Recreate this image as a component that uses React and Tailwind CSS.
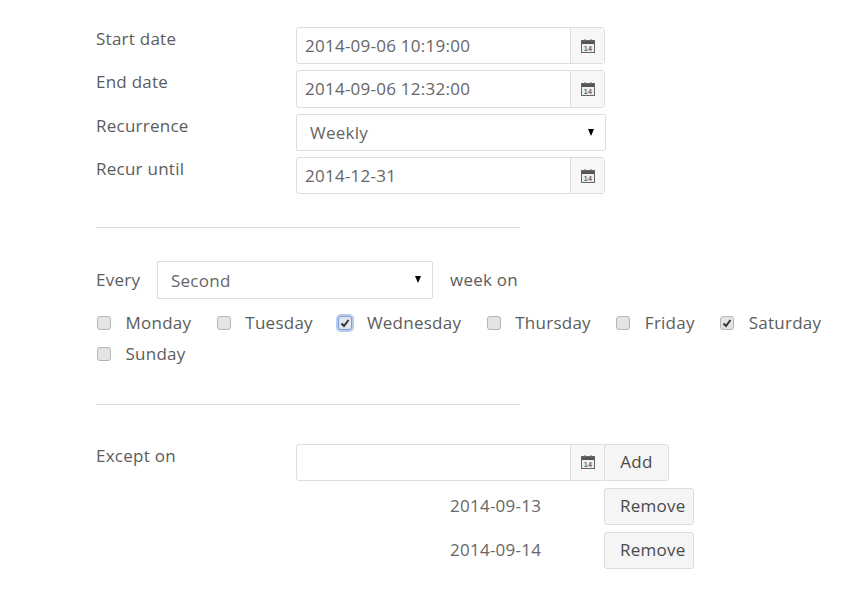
import React from "react";

const CalendarIcon = () => (
  <svg width="14" height="14" viewBox="0 0 14 14" className="block">
    <rect x="0.5" y="1.5" width="13" height="12" fill="#eef0f0" stroke="#666" />
    <rect x="1" y="2" width="12" height="3" fill="#555" />
    <rect x="3" y="0.5" width="2" height="2" fill="#666" />
    <rect x="9" y="0.5" width="2" height="2" fill="#666" />
    <text x="7" y="12" textAnchor="middle" fontSize="7" fontWeight="700" fontFamily="Liberation Sans, sans-serif" fill="#666">14</text>
  </svg>
);

const DateInput = ({ value }) => (
  <div className="flex h-[37.33px] w-[309px] rounded-[3px] border border-[#ddd] bg-white">
    <div className="flex flex-1 items-center px-2 text-[#666]">{value}</div>
    <div className="flex w-[34px] items-center justify-center border-l border-[#ddd] bg-[#f7f7f7]">
      <CalendarIcon />
    </div>
  </div>
);

const SelectBox = ({ value, width }) => (
  <div className={`flex h-[37.33px] ${width} items-center justify-between rounded-[2px] border border-[#ddd] bg-white pl-[13px] pr-[11px] text-[#666]`}>
    <span className="pt-0.5">{value}</span>
    <span className="h-0 w-0 border-x-[3.5px] border-t-[7px] border-x-transparent border-t-black" />
  </div>
);

const Day = ({ label, checked, focus }) => (
  <label className="flex items-center text-[#5c5c5c]">
    <span
      className={`flex h-[14px] w-[14px] items-center justify-center rounded-[3px] border ${
        focus ? "border-[#7f9fd6] bg-[#dfe6f2] ring-2 ring-[#b9cbea]" : "border-[#b5b5b5] bg-[#e4e4e4]"
      }`}
    >
      {checked && (
        <svg width="10" height="10" viewBox="0 0 10 10">
          <path d="M1.5 5.5 L4 8 L8.5 2" fill="none" stroke="#333" strokeWidth="2" />
        </svg>
      )}
    </span>
    <span className="ml-[14.5px]">{label}</span>
  </label>
);

const Row = ({ label, children }) => (
  <div className="flex">
    <div className="w-[200px] text-[#5c5c5c]">{label}</div>
    {children}
  </div>
);

const RemoveRow = ({ date }) => (
  <div className="flex items-center pl-[354px]">
    <div className="w-[154px] text-[#666]">{date}</div>
    <button className="h-[37.33px] w-[90px] rounded-[3px] border border-[#ddd] bg-[#f5f5f5] pl-[15px] text-left text-[#4a4a4a]">Remove</button>
  </div>
);

export default function App() {
  return (
    <div className="min-h-[592px] bg-white pl-[96px] pt-[27px] text-[17px] leading-6 tracking-[0.25px] font-['Open_Sans',sans-serif]">
      <div className="flex flex-col gap-[6px]">
        <Row label="Start date"><DateInput value="2014-09-06 10:19:00" /></Row>
        <Row label="End date"><DateInput value="2014-09-06 12:32:00" /></Row>
        <Row label="Recurrence"><SelectBox value="Weekly" width="w-[310px]" /></Row>
        <Row label="Recur until"><DateInput value="2014-12-31" /></Row>
      </div>

      <hr className="mt-[33px] w-[424px] border-[#ddd]" />

      <div className="mt-[33px] flex items-center text-[#5c5c5c]">
        <span className="w-[61px]">Every</span>
        <SelectBox value="Second" width="w-[276px]" />
        <span className="ml-[17px]">week on</span>
      </div>

      <div className="mt-[12px] flex w-[740px] flex-wrap gap-x-[25.5px] gap-y-[7px] pl-[1px]">
        <Day label="Monday" />
        <Day label="Tuesday" />
        <Day label="Wednesday" checked focus />
        <Day label="Thursday" />
        <Day label="Friday" />
        <Day label="Saturday" checked />
        <Day label="Sunday" />
      </div>

      <hr className="mt-[38px] w-[424px] border-[#ddd]" />

      <div className="mt-[39px] flex flex-col gap-[6.67px]">
        <div className="flex">
          <div className="w-[200px] text-[#5c5c5c]">Except on</div>
          <DateInput value="" />
          <button className="-ml-px h-[37.33px] w-[65px] rounded-r-[3px] border border-[#ddd] bg-[#f5f5f5] text-[#4a4a4a]">Add</button>
        </div>
        <RemoveRow date="2014-09-13" />
        <RemoveRow date="2014-09-14" />
      </div>
    </div>
  );
}
